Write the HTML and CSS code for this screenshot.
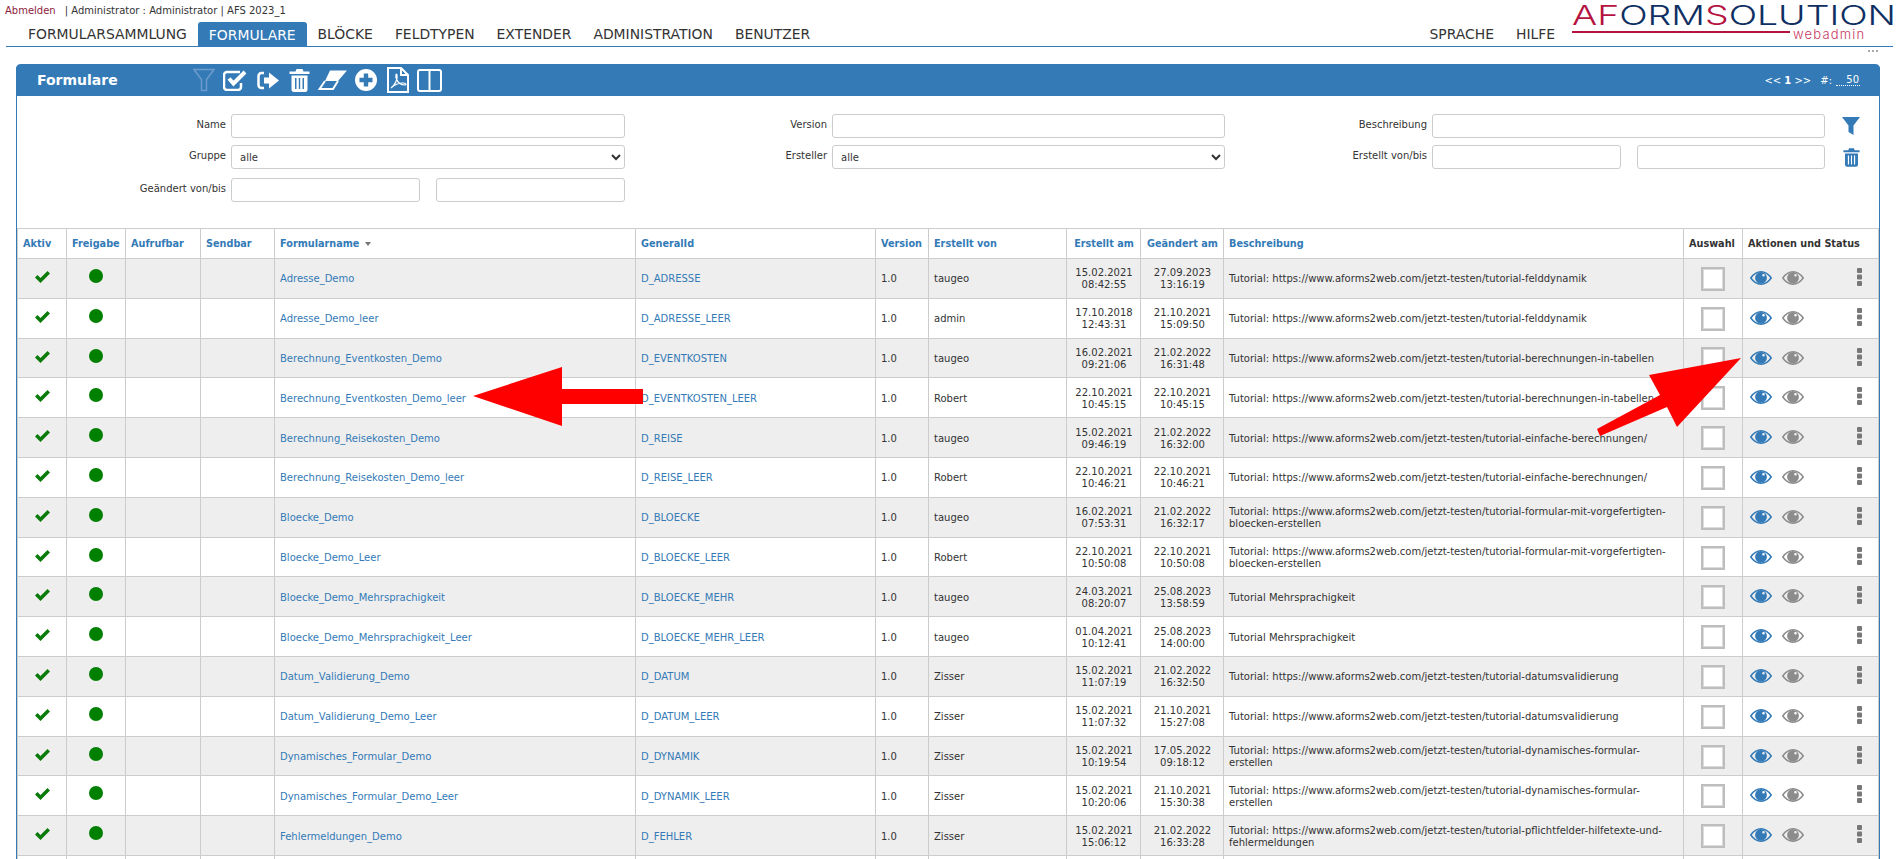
FILE: index.html
```html
<!DOCTYPE html>
<html lang="de">
  <head>
    <meta charset="UTF-8" />
    <title>Formulare</title>
    <link rel="stylesheet" href="styles.css">
  </head>
  <body>
    <svg class="defs" width="0" height="0">
      <symbol id="i-funnel" viewBox="0 0 22 24"><path d="M1 1.5H21L13.5 11.5V22.5H8.5V11.5Z" /></symbol>
      <symbol id="i-funnel-solid" viewBox="0 0 18 18"><path d="M0 0H18L11.5 8.5V18L6.5 15V8.5Z" /></symbol>
      <symbol id="i-check-square" viewBox="0 0 24 21"><path class="line" d="M18 13v4a3 3 0 0 1-3 3H4a3 3 0 0 1-3-3V5a3 3 0 0 1 3-3h13" /><path class="line thick" d="M6 8.5l4.5 5L22 2" /></symbol>
      <symbol id="i-leave" viewBox="0 0 22 19"><path class="line" d="M7 2H4.500a3 3 0 0 0-3 3v9a3 3 0 0 0 3 3H7" /><path d="M7 6.500H12V1.500L22 9.500L12 17.500V12.500H7Z" /></symbol>
      <symbol id="i-trash" viewBox="0 0 21 23"><path fill-rule="evenodd" d="M7.500 0H13.500L14.500 2.500H20.500V5H.5V2.500H6.500ZM2.500 6.500H18.500V20.500Q18.500 23 16 23H5Q2.500 23 2.500 20.500ZM6 9V20H7.500V9ZM9.800 9V20H11.200V9ZM13.500 9V20H15V9Z" /></symbol>
      <symbol id="i-eraser" viewBox="0 0 29 20"><path d="M12 .5H29L20 11H7Z" /><path class="line thin" d="M7 11L1.500 19H15L20 11" /></symbol>
      <symbol id="i-plus" viewBox="0 0 22 22"><path fill-rule="evenodd" d="M11 0A11 11 0 1 1 11 22A11 11 0 1 1 11 0ZM8.800 4.500V8.800H4.500V13.200H8.800V17.500H13.200V13.200H17.500V8.800H13.200V4.500Z" /></symbol>
      <symbol id="i-pdf" viewBox="0 0 22 26"><path class="line thin" d="M1 1H14L21 8V25H1Z" /><path class="line thin" d="M14 1V8H21" /><path class="line hair" d="M4 21C8 18 11 12 10 8C9.500 6 8 8 9.500 12C11 16 14 18 18 18C20 18 19 16 16 16C12 16 7 18 4 21Z" /></symbol>
      <symbol id="i-columns" viewBox="0 0 25 23"><rect class="line thin" x="1" y="1" width="23" height="21" rx="2" /><path class="line thin" d="M12.500 1V22" /></symbol>
      <symbol id="i-ok" viewBox="0 0 15 12"><path d="M0 6.500L2.500 4L5.500 7L12.500 0L15 2.500L5.500 12Z" /></symbol>
      <symbol id="i-eye" viewBox="0 0 22 14"><path class="line eye-lid" d="M.8 7C4 2.400 7.500 .8 11 .8S18 2.400 21.200 7C18 11.600 14.500 13.200 11 13.200S4 11.600 .8 7Z" /><path fill-rule="evenodd" d="M11 1A5.900 5.900 0 1 1 11 12.800A5.900 5.900 0 1 1 11 1ZM13.500 3A1.300 1.300 0 1 0 13.500 5.600A1.300 1.300 0 1 0 13.500 3Z" /></symbol>
      <symbol id="i-dots" viewBox="0 0 5 18"><rect width="5" height="5" rx="1" /><rect y="6.500" width="5" height="5" rx="1" /><rect y="13" width="5" height="5" rx="1" /></symbol>
    </svg>

    <div class="header">
      <div class="header-main">
        <div class="userbar"><a class="logout" href="#">Abmelden</a><span class="userinfo">| Administrator : Administrator | AFS 2023_1</span></div>
        <nav class="mainnav">
          <a href="#">FORMULARSAMMLUNG</a>
          <a href="#" class="active">FORMULARE</a>
          <a href="#">BLÖCKE</a>
          <a href="#">FELDTYPEN</a>
          <a href="#">EXTENDER</a>
          <a href="#">ADMINISTRATION</a>
          <a href="#">BENUTZER</a>
          <a href="#" class="push">SPRACHE</a>
          <a href="#">HILFE</a>
        </nav>
      </div>
      <div class="logo">
        <div class="logo-main"><span class="logo-red">AF</span>ORM<span class="logo-red">S</span>OLUTION</div>
        <div class="logo-foot">
          <span class="logo-rule"></span>
          <span class="logo-sub">webadmin</span>
        </div>
      </div>
    </div>
    <div class="more"><span></span></div>

    <div class="panel">
      <div class="panel-head">
        <h1>Formulare</h1>
        <div class="tools">
          <svg class="funnel" width="22" height="24"><use href="#i-funnel" /></svg>
          <svg class="tool gap" width="24" height="21"><use href="#i-check-square" /></svg>
          <svg class="tool gap" width="22" height="19"><use href="#i-leave" /></svg>
          <svg class="tool" width="21" height="23"><use href="#i-trash" /></svg>
          <svg class="tool" width="29" height="20"><use href="#i-eraser" /></svg>
          <svg class="tool gap" width="22" height="22"><use href="#i-plus" /></svg>
          <svg class="tool" width="22" height="26"><use href="#i-pdf" /></svg>
          <svg class="tool" width="25" height="23"><use href="#i-columns" /></svg>
        </div>
        <div class="pager"><span>&lt;&lt; <b>1</b> &gt;&gt;</span><span class="count">#:</span><span class="perpage">50</span></div>
      </div>

      <form class="filter">
        <label>Name</label>
        <input type="text" />
        <label>Version</label>
        <input type="text" />
        <label>Beschreibung</label>
        <input type="text" />
        <svg class="filter-icon" width="18" height="18"><use href="#i-funnel-solid" /></svg>

        <label>Gruppe</label>
        <select><option>alle</option></select>
        <label>Ersteller</label>
        <select><option>alle</option></select>
        <label>Erstellt von/bis</label>
        <div class="range"><input type="text" /><input type="text" /></div>
        <svg class="filter-icon" width="17" height="19"><use href="#i-trash" /></svg>

        <label>Geändert von/bis</label>
        <div class="range"><input type="text" /><input type="text" /></div>
      </form>

      <table class="list">
        <colgroup>
          <col style="width:49px"><col style="width:59px"><col style="width:75px"><col style="width:74px">
          <col style="width:361px"><col style="width:240px"><col style="width:53px"><col style="width:138px">
          <col style="width:74px"><col style="width:83px"><col style="width:460px"><col style="width:59px"><col style="width:136px">
        </colgroup>
        <thead>
          <tr>
            <th>Aktiv</th><th>Freigabe</th><th>Aufrufbar</th><th>Sendbar</th>
            <th>Formularname <i class="sort"></i></th><th>GeneralId</th><th>Version</th><th>Erstellt von</th>
            <th class="mid">Erstellt am</th><th class="mid">Geändert am</th><th>Beschreibung</th>
            <th class="plain">Auswahl</th><th class="plain">Aktionen und Status</th>
          </tr>
        </thead>
        <tbody>
          <tr>
            <td class="ic"><svg class="ok" width="15" height="12"><use href="#i-ok" /></svg></td><td class="ic"><span class="dot"></span></td><td></td><td></td>
            <td><a href="#">Adresse_Demo</a></td><td><a href="#">D_ADRESSE</a></td><td>1.0</td><td>taugeo</td>
            <td class="mid">15.02.2021<br>08:42:55</td><td class="mid">27.09.2023<br>13:16:19</td>
            <td>Tutorial: https://www.aforms2web.com/jetzt-testen/tutorial-felddynamik</td>
            <td class="ic"><span class="box"></span></td>
            <td class="ic"><div class="acts"><svg class="eye" width="22" height="14"><use href="#i-eye" /></svg><svg class="eye off" width="22" height="14"><use href="#i-eye" /></svg><svg class="dots" width="5" height="18"><use href="#i-dots" /></svg></div></td>
          </tr>
          <tr>
            <td class="ic"><svg class="ok" width="15" height="12"><use href="#i-ok" /></svg></td><td class="ic"><span class="dot"></span></td><td></td><td></td>
            <td><a href="#">Adresse_Demo_leer</a></td><td><a href="#">D_ADRESSE_LEER</a></td><td>1.0</td><td>admin</td>
            <td class="mid">17.10.2018<br>12:43:31</td><td class="mid">21.10.2021<br>15:09:50</td>
            <td>Tutorial: https://www.aforms2web.com/jetzt-testen/tutorial-felddynamik</td>
            <td class="ic"><span class="box"></span></td>
            <td class="ic"><div class="acts"><svg class="eye" width="22" height="14"><use href="#i-eye" /></svg><svg class="eye off" width="22" height="14"><use href="#i-eye" /></svg><svg class="dots" width="5" height="18"><use href="#i-dots" /></svg></div></td>
          </tr>
          <tr>
            <td class="ic"><svg class="ok" width="15" height="12"><use href="#i-ok" /></svg></td><td class="ic"><span class="dot"></span></td><td></td><td></td>
            <td><a href="#">Berechnung_Eventkosten_Demo</a></td><td><a href="#">D_EVENTKOSTEN</a></td><td>1.0</td><td>taugeo</td>
            <td class="mid">16.02.2021<br>09:21:06</td><td class="mid">21.02.2022<br>16:31:48</td>
            <td>Tutorial: https://www.aforms2web.com/jetzt-testen/tutorial-berechnungen-in-tabellen</td>
            <td class="ic"><span class="box"></span></td>
            <td class="ic"><div class="acts"><svg class="eye" width="22" height="14"><use href="#i-eye" /></svg><svg class="eye off" width="22" height="14"><use href="#i-eye" /></svg><svg class="dots" width="5" height="18"><use href="#i-dots" /></svg></div></td>
          </tr>
          <tr>
            <td class="ic"><svg class="ok" width="15" height="12"><use href="#i-ok" /></svg></td><td class="ic"><span class="dot"></span></td><td></td><td></td>
            <td><a href="#">Berechnung_Eventkosten_Demo_leer</a></td><td><a href="#">D_EVENTKOSTEN_LEER</a></td><td>1.0</td><td>Robert</td>
            <td class="mid">22.10.2021<br>10:45:15</td><td class="mid">22.10.2021<br>10:45:15</td>
            <td>Tutorial: https://www.aforms2web.com/jetzt-testen/tutorial-berechnungen-in-tabellen</td>
            <td class="ic"><span class="box"></span></td>
            <td class="ic"><div class="acts"><svg class="eye" width="22" height="14"><use href="#i-eye" /></svg><svg class="eye off" width="22" height="14"><use href="#i-eye" /></svg><svg class="dots" width="5" height="18"><use href="#i-dots" /></svg></div></td>
          </tr>
          <tr>
            <td class="ic"><svg class="ok" width="15" height="12"><use href="#i-ok" /></svg></td><td class="ic"><span class="dot"></span></td><td></td><td></td>
            <td><a href="#">Berechnung_Reisekosten_Demo</a></td><td><a href="#">D_REISE</a></td><td>1.0</td><td>taugeo</td>
            <td class="mid">15.02.2021<br>09:46:19</td><td class="mid">21.02.2022<br>16:32:00</td>
            <td>Tutorial: https://www.aforms2web.com/jetzt-testen/tutorial-einfache-berechnungen/</td>
            <td class="ic"><span class="box"></span></td>
            <td class="ic"><div class="acts"><svg class="eye" width="22" height="14"><use href="#i-eye" /></svg><svg class="eye off" width="22" height="14"><use href="#i-eye" /></svg><svg class="dots" width="5" height="18"><use href="#i-dots" /></svg></div></td>
          </tr>
          <tr>
            <td class="ic"><svg class="ok" width="15" height="12"><use href="#i-ok" /></svg></td><td class="ic"><span class="dot"></span></td><td></td><td></td>
            <td><a href="#">Berechnung_Reisekosten_Demo_leer</a></td><td><a href="#">D_REISE_LEER</a></td><td>1.0</td><td>Robert</td>
            <td class="mid">22.10.2021<br>10:46:21</td><td class="mid">22.10.2021<br>10:46:21</td>
            <td>Tutorial: https://www.aforms2web.com/jetzt-testen/tutorial-einfache-berechnungen/</td>
            <td class="ic"><span class="box"></span></td>
            <td class="ic"><div class="acts"><svg class="eye" width="22" height="14"><use href="#i-eye" /></svg><svg class="eye off" width="22" height="14"><use href="#i-eye" /></svg><svg class="dots" width="5" height="18"><use href="#i-dots" /></svg></div></td>
          </tr>
          <tr>
            <td class="ic"><svg class="ok" width="15" height="12"><use href="#i-ok" /></svg></td><td class="ic"><span class="dot"></span></td><td></td><td></td>
            <td><a href="#">Bloecke_Demo</a></td><td><a href="#">D_BLOECKE</a></td><td>1.0</td><td>taugeo</td>
            <td class="mid">16.02.2021<br>07:53:31</td><td class="mid">21.02.2022<br>16:32:17</td>
            <td>Tutorial: https://www.aforms2web.com/jetzt-testen/tutorial-formular-mit-vorgefertigten-<br>bloecken-erstellen</td>
            <td class="ic"><span class="box"></span></td>
            <td class="ic"><div class="acts"><svg class="eye" width="22" height="14"><use href="#i-eye" /></svg><svg class="eye off" width="22" height="14"><use href="#i-eye" /></svg><svg class="dots" width="5" height="18"><use href="#i-dots" /></svg></div></td>
          </tr>
          <tr>
            <td class="ic"><svg class="ok" width="15" height="12"><use href="#i-ok" /></svg></td><td class="ic"><span class="dot"></span></td><td></td><td></td>
            <td><a href="#">Bloecke_Demo_Leer</a></td><td><a href="#">D_BLOECKE_LEER</a></td><td>1.0</td><td>Robert</td>
            <td class="mid">22.10.2021<br>10:50:08</td><td class="mid">22.10.2021<br>10:50:08</td>
            <td>Tutorial: https://www.aforms2web.com/jetzt-testen/tutorial-formular-mit-vorgefertigten-<br>bloecken-erstellen</td>
            <td class="ic"><span class="box"></span></td>
            <td class="ic"><div class="acts"><svg class="eye" width="22" height="14"><use href="#i-eye" /></svg><svg class="eye off" width="22" height="14"><use href="#i-eye" /></svg><svg class="dots" width="5" height="18"><use href="#i-dots" /></svg></div></td>
          </tr>
          <tr>
            <td class="ic"><svg class="ok" width="15" height="12"><use href="#i-ok" /></svg></td><td class="ic"><span class="dot"></span></td><td></td><td></td>
            <td><a href="#">Bloecke_Demo_Mehrsprachigkeit</a></td><td><a href="#">D_BLOECKE_MEHR</a></td><td>1.0</td><td>taugeo</td>
            <td class="mid">24.03.2021<br>08:20:07</td><td class="mid">25.08.2023<br>13:58:59</td>
            <td>Tutorial Mehrsprachigkeit</td>
            <td class="ic"><span class="box"></span></td>
            <td class="ic"><div class="acts"><svg class="eye" width="22" height="14"><use href="#i-eye" /></svg><svg class="eye off" width="22" height="14"><use href="#i-eye" /></svg><svg class="dots" width="5" height="18"><use href="#i-dots" /></svg></div></td>
          </tr>
          <tr>
            <td class="ic"><svg class="ok" width="15" height="12"><use href="#i-ok" /></svg></td><td class="ic"><span class="dot"></span></td><td></td><td></td>
            <td><a href="#">Bloecke_Demo_Mehrsprachigkeit_Leer</a></td><td><a href="#">D_BLOECKE_MEHR_LEER</a></td><td>1.0</td><td>taugeo</td>
            <td class="mid">01.04.2021<br>10:12:41</td><td class="mid">25.08.2023<br>14:00:00</td>
            <td>Tutorial Mehrsprachigkeit</td>
            <td class="ic"><span class="box"></span></td>
            <td class="ic"><div class="acts"><svg class="eye" width="22" height="14"><use href="#i-eye" /></svg><svg class="eye off" width="22" height="14"><use href="#i-eye" /></svg><svg class="dots" width="5" height="18"><use href="#i-dots" /></svg></div></td>
          </tr>
          <tr>
            <td class="ic"><svg class="ok" width="15" height="12"><use href="#i-ok" /></svg></td><td class="ic"><span class="dot"></span></td><td></td><td></td>
            <td><a href="#">Datum_Validierung_Demo</a></td><td><a href="#">D_DATUM</a></td><td>1.0</td><td>Zisser</td>
            <td class="mid">15.02.2021<br>11:07:19</td><td class="mid">21.02.2022<br>16:32:50</td>
            <td>Tutorial: https://www.aforms2web.com/jetzt-testen/tutorial-datumsvalidierung</td>
            <td class="ic"><span class="box"></span></td>
            <td class="ic"><div class="acts"><svg class="eye" width="22" height="14"><use href="#i-eye" /></svg><svg class="eye off" width="22" height="14"><use href="#i-eye" /></svg><svg class="dots" width="5" height="18"><use href="#i-dots" /></svg></div></td>
          </tr>
          <tr>
            <td class="ic"><svg class="ok" width="15" height="12"><use href="#i-ok" /></svg></td><td class="ic"><span class="dot"></span></td><td></td><td></td>
            <td><a href="#">Datum_Validierung_Demo_Leer</a></td><td><a href="#">D_DATUM_LEER</a></td><td>1.0</td><td>Zisser</td>
            <td class="mid">15.02.2021<br>11:07:32</td><td class="mid">21.10.2021<br>15:27:08</td>
            <td>Tutorial: https://www.aforms2web.com/jetzt-testen/tutorial-datumsvalidierung</td>
            <td class="ic"><span class="box"></span></td>
            <td class="ic"><div class="acts"><svg class="eye" width="22" height="14"><use href="#i-eye" /></svg><svg class="eye off" width="22" height="14"><use href="#i-eye" /></svg><svg class="dots" width="5" height="18"><use href="#i-dots" /></svg></div></td>
          </tr>
          <tr>
            <td class="ic"><svg class="ok" width="15" height="12"><use href="#i-ok" /></svg></td><td class="ic"><span class="dot"></span></td><td></td><td></td>
            <td><a href="#">Dynamisches_Formular_Demo</a></td><td><a href="#">D_DYNAMIK</a></td><td>1.0</td><td>Zisser</td>
            <td class="mid">15.02.2021<br>10:19:54</td><td class="mid">17.05.2022<br>09:18:12</td>
            <td>Tutorial: https://www.aforms2web.com/jetzt-testen/tutorial-dynamisches-formular-<br>erstellen</td>
            <td class="ic"><span class="box"></span></td>
            <td class="ic"><div class="acts"><svg class="eye" width="22" height="14"><use href="#i-eye" /></svg><svg class="eye off" width="22" height="14"><use href="#i-eye" /></svg><svg class="dots" width="5" height="18"><use href="#i-dots" /></svg></div></td>
          </tr>
          <tr>
            <td class="ic"><svg class="ok" width="15" height="12"><use href="#i-ok" /></svg></td><td class="ic"><span class="dot"></span></td><td></td><td></td>
            <td><a href="#">Dynamisches_Formular_Demo_Leer</a></td><td><a href="#">D_DYNAMIK_LEER</a></td><td>1.0</td><td>Zisser</td>
            <td class="mid">15.02.2021<br>10:20:06</td><td class="mid">21.10.2021<br>15:30:38</td>
            <td>Tutorial: https://www.aforms2web.com/jetzt-testen/tutorial-dynamisches-formular-<br>erstellen</td>
            <td class="ic"><span class="box"></span></td>
            <td class="ic"><div class="acts"><svg class="eye" width="22" height="14"><use href="#i-eye" /></svg><svg class="eye off" width="22" height="14"><use href="#i-eye" /></svg><svg class="dots" width="5" height="18"><use href="#i-dots" /></svg></div></td>
          </tr>
          <tr>
            <td class="ic"><svg class="ok" width="15" height="12"><use href="#i-ok" /></svg></td><td class="ic"><span class="dot"></span></td><td></td><td></td>
            <td><a href="#">Fehlermeldungen_Demo</a></td><td><a href="#">D_FEHLER</a></td><td>1.0</td><td>Zisser</td>
            <td class="mid">15.02.2021<br>15:06:12</td><td class="mid">21.02.2022<br>16:33:28</td>
            <td>Tutorial: https://www.aforms2web.com/jetzt-testen/tutorial-pflichtfelder-hilfetexte-und-<br>fehlermeldungen</td>
            <td class="ic"><span class="box"></span></td>
            <td class="ic"><div class="acts"><svg class="eye" width="22" height="14"><use href="#i-eye" /></svg><svg class="eye off" width="22" height="14"><use href="#i-eye" /></svg><svg class="dots" width="5" height="18"><use href="#i-dots" /></svg></div></td>
          </tr>
          <tr>
            <td></td><td></td><td></td><td></td><td></td><td></td><td></td><td></td><td></td><td></td><td></td><td></td><td></td>
          </tr>
        </tbody>
      </table>
    </div>

    <!-- rote Pfeile liegen ueber der Tabelle -->
    <svg class="arrows" width="1900" height="859" viewBox="0 0 1900 859">
      <polygon points="473,396 562,367 562,389 643,389 643,404 562,404 562,426" />
      <polygon points="1741,358 1649,375 1660,395 1597,429 1600,436 1667,407 1677,427" />
    </svg>
  </body>
</html>
```

FILE: styles.css
```css
* {
  box-sizing: border-box;
}

html,
body {
  height: 100%;
  overflow: hidden;
}

body {
  margin: 0;
  position: relative;
  font-family: "DejaVu Sans", Verdana, sans-serif;
  font-size: 10px;
  color: #333;
  background: #fff;
}

a {
  color: #337ab7;
  text-decoration: none;
}

.defs {
  position: absolute;
}

/* Kopfbereich */
.header {
  display: flex;
  height: 47px;
  margin: 0 7px 0 6px;
  border-bottom: 1px solid #337ab7;
}

.header-main {
  flex: 1;
  min-width: 0;
}

.userbar {
  height: 22px;
  line-height: 22px;
  margin-left: -1px;
  white-space: nowrap;
}

.logout {
  color: #8c1c3c;
}

.userinfo {
  margin-left: 9px;
}

.mainnav {
  display: flex;
  height: 24px;
  padding: 0 4px 0 11px;
}

.mainnav a {
  height: 24px;
  padding: 0 11px;
  line-height: 24px;
  font-size: 13.9px;
  color: #333;
  white-space: nowrap;
}

.mainnav a.active {
  background: #337ab7;
  color: #fff;
  line-height: 26px;
  border-radius: 3px 3px 0 0;
}

.mainnav a.push {
  margin-left: auto;
}

.logo {
  flex: none;
  width: 323px;
  padding: 5px 0 0 2px;
}

.logo-main {
  width: 236px;
  height: 21px;
  line-height: 20px;
  font-family: Inter, "Liberation Sans", Arial, sans-serif;
  font-size: 27.5px;
  font-weight: 300;
  color: #0f2f63;
  white-space: nowrap;
  transform: scaleX(1.36);
  transform-origin: left top;
}

.logo-red {
  color: #b5123f;
}

.logo-foot {
  display: flex;
  align-items: flex-start;
  gap: 3px;
}

.logo-rule {
  flex: none;
  width: 218px;
  height: 1.5px;
  margin-top: 5px;
  background: #b5123f;
}

.logo-sub {
  line-height: 13px;
  font-family: Inter, "Liberation Sans", Arial, sans-serif;
  font-size: 13px;
  font-weight: 300;
  letter-spacing: 1.2px;
  color: #c8385f;
  white-space: nowrap;
  margin-top: 2px;
}

.more {
  display: flex;
  justify-content: flex-end;
  height: 17px;
  padding: 3px 22px 0 0;
}

.more span {
  width: 10px;
  height: 0;
  border-top: 2px dotted #aaa;
}

/* Panel */
.panel {
  margin: 0 20px 0 16px;
  border-left: 1px solid #337ab7;
  border-right: 1px solid #337ab7;
  border-radius: 5px 5px 0 0;
}

.panel-head {
  display: flex;
  align-items: center;
  height: 32px;
  margin: 0 -1px;
  background: #337ab7;
  border-radius: 5px 5px 0 0;
  color: #fff;
}

.panel-head h1 {
  width: 177px;
  margin: 0;
  padding-left: 21px;
  font-size: 14px;
  font-weight: bold;
}

.tools {
  display: flex;
  align-items: center;
  gap: 8px;
}

.tool {
  fill: #fff;
}

.tool.gap {
  margin-right: 2px;
}

.funnel {
  fill: none;
  stroke: #6c9ccb;
  stroke-width: 1.5;
}

.line {
  fill: none;
  stroke: #fff;
  stroke-width: 2.5;
}

.line.thick {
  stroke-width: 4;
}

.line.thin {
  stroke-width: 2;
}

.line.hair {
  stroke-width: 1.2;
}

.pager {
  display: flex;
  align-items: center;
  margin-left: auto;
  padding-right: 20px;
}

.count {
  margin-left: 9px;
}

.perpage {
  width: 24px;
  margin-left: 4px;
  text-align: right;
  padding-right: 1px;
  border-bottom: 1px dotted #fff;
}

/* Filter */
.filter {
  display: grid;
  grid-template-columns: 206px 394px 207px 393px 207px 393px 35px;
  grid-template-rows: 31px 33px 24px;
  height: 132px;
  padding: 18px 0 0 8px;
}

.filter label {
  padding: 5px 5px 0 0;
  text-align: right;
}

.filter input,
.filter select {
  width: 100%;
  height: 24px;
  padding: 0 7px;
  border: 1px solid #ccc;
  border-radius: 3px;
  background: #fff;
  font: inherit;
  color: #333;
}

.filter select {
  padding: 0 4px;
}

.range {
  display: flex;
  gap: 16px;
}

.filter-icon {
  justify-self: end;
  margin-top: 3px;
  fill: #337ab7;
}

/* Tabelle */
.list {
  table-layout: fixed;
  width: 1861px;
  border-collapse: collapse;
}

.list th,
.list td {
  padding: 0 4px 0 5px;
  border: 1px solid #ccc;
}

.list th {
  height: 30px;
  text-align: left;
  font-size: 9.7px;
  font-weight: bold;
  color: #337ab7;
  white-space: nowrap;
}

.list th.mid,
.list td.mid {
  text-align: center;
}

.list th.plain {
  color: #333;
}

.list td {
  height: 39.8px;
  line-height: 12px;
  padding-top: 2px;
}

.list tbody tr:nth-child(odd) {
  background: #eee;
}

.list tbody tr:last-child {
  background: #fff;
}

.list td.ic {
  text-align: center;
  vertical-align: top;
  padding: 0;
}

.sort {
  display: inline-block;
  margin-left: 2px;
  vertical-align: 1px;
  border-top: 4px solid #777;
  border-left: 3px solid transparent;
  border-right: 3px solid transparent;
}

.ok {
  display: block;
  margin: 12px auto 0;
  fill: #0a7a0a;
}

.dot {
  display: block;
  width: 14px;
  height: 14px;
  margin: 10px auto 0;
  border-radius: 50%;
  background: #008000;
}

.box {
  display: block;
  width: 24px;
  height: 24px;
  margin: 8px auto 0;
  background: #fff;
  border: 2px solid #bdbdbd;
  box-shadow: inset 0 0 0 1px #dcdcdc;
}

.acts {
  display: flex;
  align-items: flex-start;
  padding: 9px 16px 0 7px;
}

.eye {
  margin: 3px 10px 0 0;
  fill: #337ab7;
  color: #337ab7;
}

.eye-lid {
  stroke: currentColor;
  stroke-width: 1.5;
}

.eye.off {
  fill: #8c8c8c;
  color: #8c8c8c;
}

.dots {
  margin-left: auto;
  fill: #777;
}

.arrows {
  position: absolute;
  left: 0;
  top: 0;
  pointer-events: none;
  fill: #f00;
}
```
